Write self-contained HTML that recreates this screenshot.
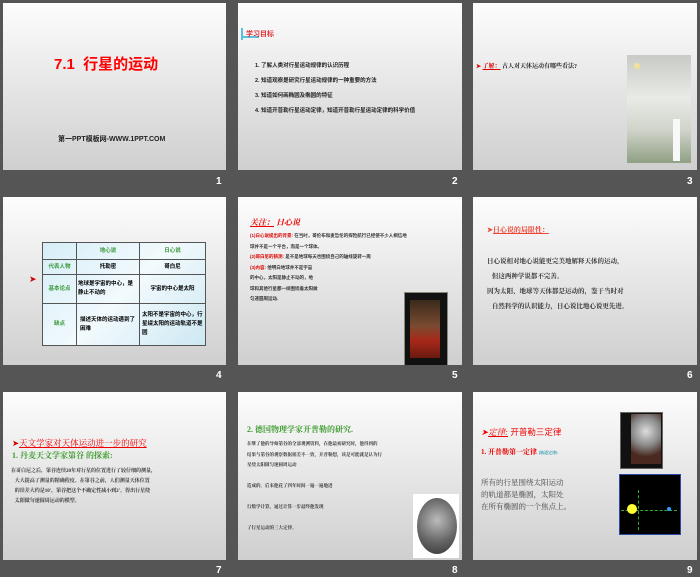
<!DOCTYPE html>
<html><head><meta charset="utf-8"><style>
body{margin:0;width:700px;height:577px;background:#555;position:relative;overflow:hidden;font-family:"Liberation Sans","Noto Sans CJK SC",sans-serif}
.s{position:absolute;background:linear-gradient(#fdfdfd,#e6e6e6 50%,#cfcfcf);overflow:hidden}
.n{position:absolute;color:#fff;font-size:10px;font-weight:bold}
.a{position:absolute;white-space:nowrap}
.k{font-family:"Liberation Serif","Noto Serif CJK SC",serif}
table.t td{white-space:normal;border:1px solid #555;padding:0 1px;line-height:9px}
</style></head><body>
<!-- slide 1 -->
<div class="s" style="left:3px;top:3px;width:223px;height:167px">
<div class="a" style="left:51px;top:50px;color:#f00;font-size:15px;font-weight:bold">7.1&nbsp; 行星的运动</div>
<div class="a" style="left:55px;top:131px;color:#222;font-size:7px;font-weight:bold">第一PPT模板网-WWW.1PPT.COM</div>
</div>
<div class="n" style="left:216px;top:176px">1</div>
<!-- slide 2 -->
<div class="s" style="left:238px;top:3px;width:224px;height:167px">
<div class="a" style="left:3px;top:25px;width:2px;height:12px;background:#5bc0de"></div>
<div class="a" style="left:5px;top:33px;width:16px;height:2px;background:#5bc0de"></div>
<div class="a" style="left:8px;top:26px;color:#e0303a;font-size:7px;font-weight:bold">学习目标</div>
<div class="a" style="left:17px;top:56px;color:#222;font-size:5.5px;line-height:15px;font-weight:bold">1. 了解人类对行星运动规律的认识历程<br>2. 知道观察是研究行星运动规律的一种重要的方法<br>3. 知道如何画椭圆及椭圆的特征<br>4. 知道开普勒行星运动定律，知道开普勒行星运动定律的科学价值</div>
</div>
<div class="n" style="left:452px;top:176px">2</div>
<!-- slide 3 -->
<div class="s" style="left:473px;top:3px;width:224px;height:167px">
<div class="a k" style="left:3px;top:58px;font-size:6px;color:#222;font-weight:bold"><span style="color:#d00">➤ <u>了解：</u></span> 古人对天体运动有哪些看法?</div>
<div class="a" style="left:154px;top:52px;width:64px;height:108px;background:linear-gradient(#c8cbc5,#e9ebe6 40%,#cfd3c9 70%,#8fa083)"></div>
<div class="a" style="left:161px;top:60px;width:6px;height:6px;border-radius:50%;background:#f2e39a"></div>
<div class="a" style="left:200px;top:116px;width:7px;height:42px;background:#f8f8f8"></div>
</div>
<div class="n" style="left:687px;top:176px">3</div>
<!-- slide 4 -->
<div class="s" style="left:3px;top:197px;width:223px;height:168px">
<div class="a" style="left:26px;top:77px;color:#c00;font-size:9px">➤</div>
<table class="a t" style="left:39px;top:45px;border-collapse:collapse;font-size:5.5px;font-weight:bold;background:linear-gradient(135deg,#d6eef7,#f2fafd,#cde8f3);text-align:center;white-space:normal">
<tr style="height:17px;color:#3a9a3a"><td style="width:31px"></td><td style="width:60px">地心说</td><td style="width:63px">日心说</td></tr>
<tr style="height:15px"><td style="color:#3a9a3a">代表人物</td><td>托勒密</td><td>哥白尼</td></tr>
<tr style="height:29px"><td style="color:#3a9a3a">基本论点</td><td style="text-align:left">地球是宇宙的中心，是静止不动的</td><td>宇宙的中心是太阳</td></tr>
<tr style="height:42px"><td style="color:#3a9a3a">缺点</td><td style="text-align:left;padding-left:3px">描述天体的运动遇到了困难</td><td style="text-align:left;padding-left:2px">太阳不是宇宙的中心，行星绕太阳的运动轨道不是圆</td></tr>
</table>
</div>
<div class="n" style="left:216px;top:370px">4</div>
<!-- slide 5 -->
<div class="s" style="left:238px;top:197px;width:224px;height:168px">
<div class="a k" style="left:12px;top:20px;color:#e00;font-size:8px;font-style:italic;font-weight:bold"><u>关注：</u> 日心说</div>
<div class="a" style="left:12px;top:34px;font-size:4.5px;line-height:10.5px;color:#333;font-weight:bold"><span style="color:#d00">(1)日心说提出的背景:</span> 在当时，哥伦布和麦哲伦的探险航行已经使不少人相信地<br>球并不是一个平台，而是一个球体。<br><span style="color:#d00">(2)哥白尼的猜测:</span> 是不是地球每天也围绕自己的轴线旋转一周<br><span style="color:#d00">(3)内容:</span> 他明白地球并不是宇宙<br>的中心，太阳是静止不动的，地<br>球和其他行星都一样围绕着太阳做<br>匀速圆周运动.</div>
<div class="a" style="left:166px;top:95px;width:42px;height:72px;background:#111;border:1px solid #887"></div>
<div class="a" style="left:172px;top:103px;width:30px;height:58px;background:linear-gradient(#3a2a1c,#7a4a30 45%,#a8281a 70%,#6a1a10)"></div>
</div>
<div class="n" style="left:452px;top:370px">5</div>
<!-- slide 6 -->
<div class="s" style="left:473px;top:197px;width:224px;height:168px">
<div class="a k" style="left:14px;top:28px;color:#e43;font-size:7px;font-weight:bold"><span>➤</span><u>日心说的局限性：</u></div>
<div class="a k" style="left:14px;top:57px;font-size:6.5px;line-height:15px;color:#333;font-weight:bold">日心说相对地心说能更完美地解释天体的运动，<br>&nbsp;&nbsp;&nbsp;但这两种学说都不完善。<br>因为太阳、地球等天体都是运动的，鉴于当时对<br>&nbsp;&nbsp;&nbsp;自然科学的认识能力，日心说比地心说更先进。</div>
</div>
<div class="n" style="left:687px;top:370px">6</div>
<!-- slide 7 -->
<div class="s" style="left:3px;top:392px;width:223px;height:168px">
<div class="a k" style="left:9px;top:45px;color:#e00;font-size:8.5px"><span style="color:#c00">➤</span><u>天文学家对天体运动进一步的研究</u></div>
<div class="a k" style="left:9px;top:58px;color:#3a9a2a;font-size:8px;font-weight:bold">1. 丹麦天文学家第谷 的探索:</div>
<div class="a k" style="left:8px;top:75px;font-size:5px;line-height:10px;color:#333;font-weight:bold">在哥白尼之后，第谷连续20年对行星的位置进行了较仔细的测量，<br>&nbsp;&nbsp;&nbsp;大大提高了测量的精确程度。在第谷之前，人们测量天体位置<br>&nbsp;&nbsp;&nbsp;的误差大约是10′，第谷把这个不确定性减小到2′。得出行星绕<br>&nbsp;&nbsp;&nbsp;太阳做匀速圆周运动的模型。</div>
</div>
<div class="n" style="left:216px;top:565px">7</div>
<!-- slide 8 -->
<div class="s" style="left:238px;top:392px;width:224px;height:168px">
<div class="a k" style="left:9px;top:32px;color:#3a9a2a;font-size:8px;font-weight:bold">2. 德国物理学家开普勒的研究.</div>
<div class="a k" style="left:9px;top:47px;font-size:4.5px;line-height:10.5px;color:#333;font-weight:bold">在继了他的导师第谷的全部观测资料，在他最初研究时，他得到的<br>结果与第谷的观察数据相差不一致，开普勒想，该是可能就是认为行<br>星绕太阳做匀速圆周运动<br><br>造成的。后来他花了四年时间一遍一遍地进<br><br>行数学计算，通过计算一步最终他发现<br><br>了行星运动的三大定律。</div>
<div class="a" style="left:175px;top:102px;width:46px;height:64px;background:#fff"></div>
<div class="a" style="left:179px;top:106px;width:40px;height:56px;border-radius:50%;background:radial-gradient(circle at 50% 40%,#bbb,#666 55%,#333)"></div>
</div>
<div class="n" style="left:452px;top:565px">8</div>
<!-- slide 9 -->
<div class="s" style="left:473px;top:392px;width:224px;height:168px">
<div class="a" style="left:8px;top:34px;font-size:8.5px;color:#e00"><span class="k" style="font-style:italic">➤<u>定律:</u></span> 开普勒三定律</div>
<div class="a k" style="left:8px;top:55px;font-size:7px;color:#e00;font-weight:bold">1. 开普勒第一定律 <span style="font-size:4px;color:#29a">(轨道定律)</span></div>
<div class="a k" style="left:8px;top:85px;font-size:7.5px;line-height:12px;color:#444">所有的行星围绕太阳运动<br>的轨道都是椭圆，太阳处<br>在所有椭圆的一个焦点上。</div>
<div class="a" style="left:147px;top:20px;width:41px;height:55px;background:#111;border:1px solid #666"></div>
<div class="a" style="left:158px;top:22px;width:30px;height:50px;background:radial-gradient(circle at 50% 35%,#ddd,#888 40%,#4a2a20 70%)"></div>
<div class="a" style="left:146px;top:82px;width:60px;height:59px;background:#000;border:1px solid #2a4aaa"></div>
<div class="a" style="left:165px;top:98px;width:2px;height:40px;border-left:1px dashed #3a3"></div>
<div class="a" style="left:148px;top:118px;width:56px;height:1px;border-top:1px dashed #3a3"></div>
<div class="a" style="left:154px;top:112px;width:10px;height:10px;border-radius:50%;background:#ff3"></div>
<div class="a" style="left:194px;top:115px;width:4px;height:4px;border-radius:50%;background:#39f"></div>
</div>
<div class="n" style="left:687px;top:565px">9</div>
</body></html>
